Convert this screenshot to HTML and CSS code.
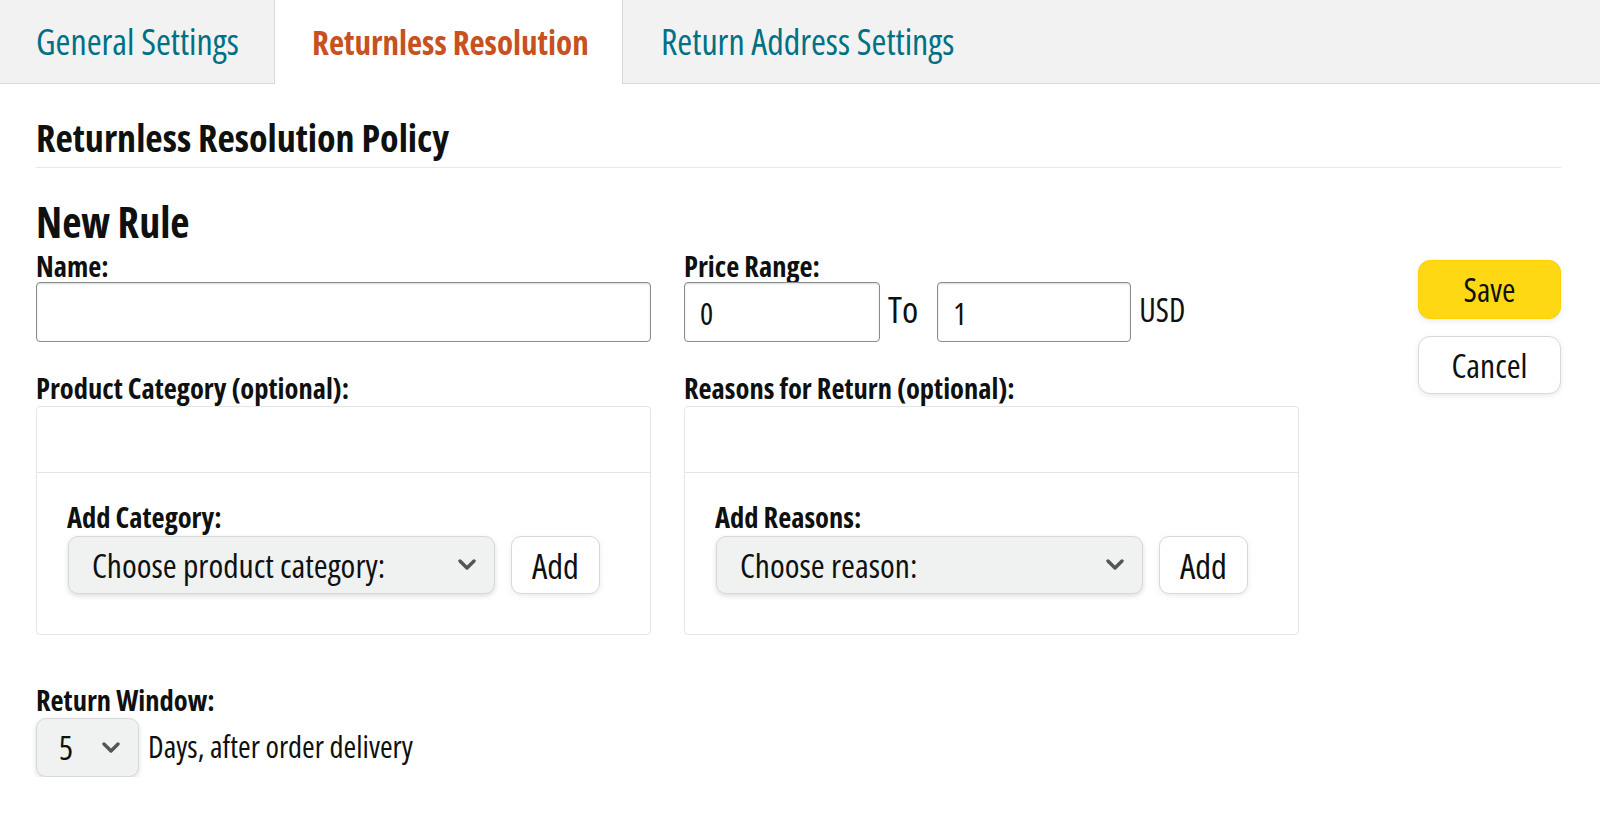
FILE: index.html
```html
<!DOCTYPE html>
<html lang="en">
<head>
  <meta charset="UTF-8">
  <meta name="viewport" content="width=device-width, initial-scale=1.0">
  <title>Returnless Resolution</title>
  <link rel="stylesheet" href="styles.css">
</head>
<body>

  <div class="tabs">
    <a class="tab tab-first" href="#">General Settings</a>
    <a class="tab tab-active" href="#">Returnless Resolution</a>
    <a class="tab tab-last" href="#">Return Address Settings</a>
  </div>

  <div class="page">
    <h1 class="policy-title">Returnless Resolution Policy</h1>
    <h2 class="rule-title">New Rule</h2>

    <div class="rule-layout">
      <div class="rule-fields">
        <div class="field-grid">
          <div class="field">
            <label class="field-label" for="rule-name">Name:</label>
            <input class="text-input name-input" type="text" id="rule-name">
          </div>

          <div class="field">
            <label class="field-label" for="price-from">Price Range:</label>
            <div class="price-row">
              <input class="text-input price-input" type="text" id="price-from" value="0">
              <span class="price-to">To</span>
              <input class="text-input price-input price-input-end" type="text" id="price-to" value="1">
              <span class="price-unit">USD</span>
            </div>
          </div>

          <div class="field">
            <div class="field-label">Product Category (optional):</div>
            <div class="pick-box">
              <div class="pick-list"></div>
              <div class="pick-add">
                <div class="field-label">Add Category:</div>
                <div class="pick-row">
                  <div class="dropdown pick-dropdown">
                    <span>Choose product category:</span>
                    <svg class="chevron" width="20" height="12" viewBox="0 0 20 12"><polyline points="3,2 10,9 17,2" fill="none" stroke="#555" stroke-width="3.4" stroke-linecap="round" stroke-linejoin="round"/></svg>
                  </div>
                  <button class="btn btn-add" type="button">Add</button>
                </div>
              </div>
            </div>
          </div>

          <div class="field">
            <div class="field-label">Reasons for Return (optional):</div>
            <div class="pick-box">
              <div class="pick-list"></div>
              <div class="pick-add">
                <div class="field-label">Add Reasons:</div>
                <div class="pick-row">
                  <div class="dropdown pick-dropdown">
                    <span>Choose reason:</span>
                    <svg class="chevron" width="20" height="12" viewBox="0 0 20 12"><polyline points="3,2 10,9 17,2" fill="none" stroke="#555" stroke-width="3.4" stroke-linecap="round" stroke-linejoin="round"/></svg>
                  </div>
                  <button class="btn btn-add" type="button">Add</button>
                </div>
              </div>
            </div>
          </div>
        </div>

        <div class="field window-field">
          <div class="field-label">Return Window:</div>
          <div class="window-row">
            <div class="dropdown window-dropdown">
              <span>5</span>
              <svg class="chevron" width="20" height="12" viewBox="0 0 20 12"><polyline points="3,2 10,9 17,2" fill="none" stroke="#555" stroke-width="3.4" stroke-linecap="round" stroke-linejoin="round"/></svg>
            </div>
            <span class="window-text">Days, after order delivery</span>
          </div>
        </div>
      </div>

      <div class="rule-actions">
        <button class="btn btn-save" type="button">Save</button>
        <button class="btn btn-cancel" type="button">Cancel</button>
      </div>
    </div>
  </div>

</body>
</html>
```

FILE: styles.css
```css
body {
  margin: 0;
  font-family: "Open Sans", "Liberation Sans", Arial, sans-serif;
  font-stretch: 75%;
  color: #0f1111;
  background-color: #fff;
}

.tabs {
  display: flex;
  height: 84px;
  background-color: #f2f2f2;
  white-space: nowrap;
}

.tab {
  display: flex;
  align-items: center;
  font-size: 36px;
  color: #007185;
  text-decoration: none;
  border-bottom: 1px solid #d5dbdb;
}

.tab-first {
  width: 238px;
  padding-left: 36px;
  border-right: 1px solid #d5dbdb;
}

.tab-active {
  width: 310px;
  padding-left: 37px;
  background-color: #fff;
  border-bottom: none;
  color: #c7511f;
  font-weight: bold;
  font-size: 33px;
}

.tab-last {
  flex: 1;
  padding-left: 38px;
  border-left: 1px solid #d5dbdb;
}

.page {
  padding: 0 39px 0 36px;
}

.policy-title {
  margin: 31px 0 0;
  font-size: 38px;
  line-height: 44px;
  padding-bottom: 8px;
  border-bottom: 1px solid #e7e7e7;
}

.rule-title {
  margin: 30px 0 0;
  font-size: 42px;
  line-height: 48px;
}

.rule-layout {
  display: flex;
  justify-content: space-between;
  margin-top: 4px;
}

.field-grid {
  display: grid;
  grid-template-columns: 615px 615px;
  column-gap: 33px;
  row-gap: 30px;
}

.field-label {
  font-size: 28.5px;
  font-weight: bold;
  line-height: 32px;
  margin-bottom: 2px;
}

.text-input {
  box-sizing: border-box;
  height: 60px;
  padding: 2px 15px 0;
  font-family: inherit;
  font-stretch: inherit;
  font-size: 31px;
  color: #0f1111;
  border: 1px solid #888c8c;
  border-radius: 4px;
  box-shadow: 0 1px 2px rgba(15, 17, 17, 0.15) inset;
  outline: none;
}

.name-input {
  display: block;
  width: 100%;
}

.price-row {
  display: flex;
  align-items: center;
}

.price-input {
  width: 196px;
}

.price-input-end {
  width: 194px;
}

.price-to {
  font-size: 37px;
  line-height: 40px;
  margin: -6px 19px 0 8px;
}

.price-unit {
  font-size: 32px;
  line-height: 40px;
  margin: -4px 0 0 8px;
}

.pick-box {
  border: 1px solid #e3e6e6;
  border-radius: 4px;
}

.pick-list {
  height: 65px;
  border-bottom: 1px solid #e3e6e6;
}

.pick-add {
  padding: 28px 30px 40px 31px;
}

.pick-add .field-label {
  margin: 0 0 3px -1px;
}

.pick-row {
  display: flex;
  gap: 16px;
}

.dropdown {
  box-sizing: border-box;
  display: flex;
  align-items: center;
  justify-content: space-between;
  height: 58px;
  background-color: #f0f2f2;
  border: 1px solid #d5d9d9;
  border-radius: 10px;
  box-shadow: 0 2px 5px rgba(15, 17, 17, 0.15);
  font-size: 33.6px;
}

.pick-dropdown {
  width: 427px;
  padding: 0 17px 0 23px;
}

.chevron {
  flex-shrink: 0;
}

.btn {
  box-sizing: border-box;
  font-family: inherit;
  font-stretch: inherit;
  color: #0f1111;
  cursor: pointer;
  border-radius: 10px;
}

.btn-add {
  width: 89px;
  height: 58px;
  font-size: 34.5px;
  background-color: #fff;
  border: 1px solid #d5d9d9;
  box-shadow: 0 2px 5px rgba(213, 217, 217, 0.5);
}

.window-field {
  margin-top: 49px;
}

.window-row {
  display: flex;
  align-items: center;
  gap: 9px;
}

.window-dropdown {
  width: 103px;
  height: 59px;
  padding: 0 17px 0 22px;
  font-size: 33px;
}

.window-text {
  font-size: 30.6px;
  margin-top: -4px;
}

.rule-actions {
  display: flex;
  flex-direction: column;
  gap: 17px;
  width: 143px;
  margin-top: 10px;
}

.btn-save {
  height: 59px;
  font-size: 32.5px;
  background-color: #ffd814;
  border: 1px solid #fcd200;
  border-radius: 12px;
  box-shadow: 0 2px 5px rgba(213, 217, 217, 0.5);
}

.btn-cancel {
  height: 58px;
  font-size: 33.5px;
  background-color: #fff;
  border: 1px solid #d5d9d9;
  border-radius: 12px;
  box-shadow: 0 2px 5px rgba(213, 217, 217, 0.5);
}
```
